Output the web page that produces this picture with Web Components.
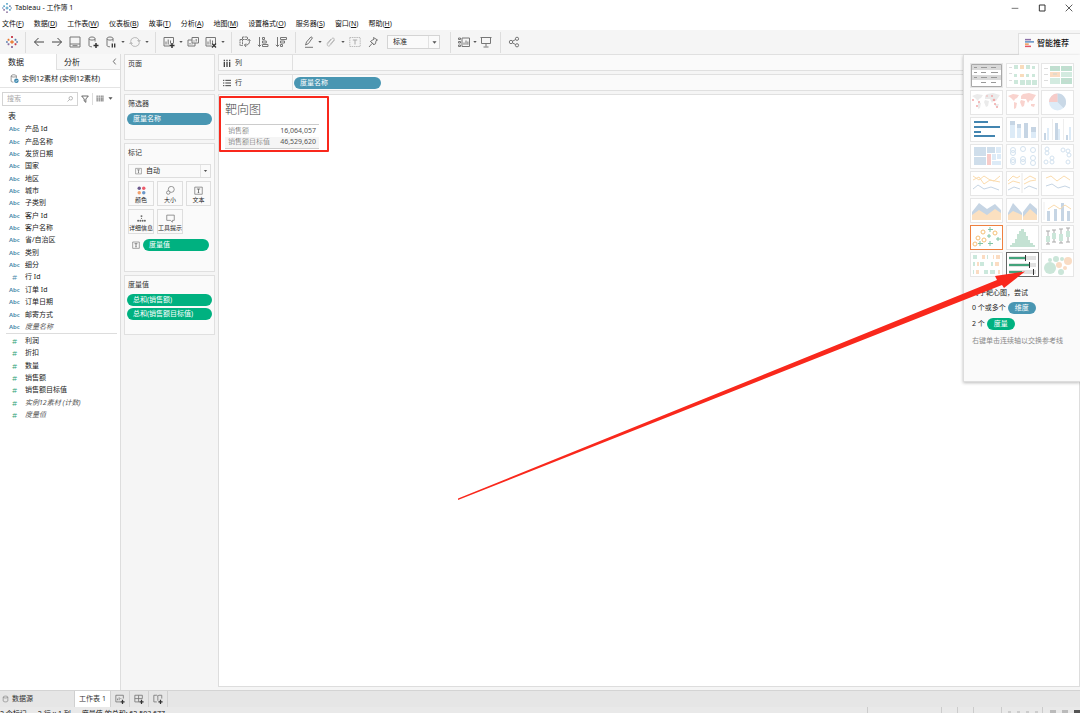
<!DOCTYPE html>
<html lang="zh-CN">
<head>
<meta charset="utf-8">
<title>Tableau - 工作簿 1</title>
<style>
html,body{margin:0;height:100%;overflow:hidden}
body{font:7px/10px "Noto Sans","Noto Sans CJK SC",sans-serif;color:#333;background:#fff}
</style>
</head>
<body>
<tb-app></tb-app>
<script>
const RESET = `*{box-sizing:border-box}button,input,select{font:inherit;color:inherit;margin:0;padding:0;border:0;background:none;border-radius:0;outline:0}
button{display:flex;align-items:center;justify-content:center}a{color:inherit;text-decoration:none}`;
function define(name, css, html, setup) {
  customElements.define(name, class extends HTMLElement {
    constructor() {
      super();
      this.attachShadow({mode: 'open'});
    }
    connectedCallback() {
      if (this.shadowRoot.firstChild) return;
      const t = document.createElement('template');
      t.innerHTML = `<style>${RESET}${css}</style>` + (typeof html === 'function' ? html(this) : html);
      this.shadowRoot.append(t.content.cloneNode(true));
      if (setup) setup(this);
    }
  });
}

/* ---------- icons, 12 x 12 ---------- */
const chart = '<path d="M1 1.5h9.5v8.5h-9.5zM3 8.5v-3M5.200 8.500v-5M7.500 8.500v-4"/>';
const cyl = '<path d="M2 2.500c0-2 6-2 6 0v3M2 2.500v7c0 1 2 1.300 3 1.300M2 2.800c0 1.700 6 1.700 6 0"/>';
const plus = '<path stroke="#333" stroke-width="1.500" d="M9 7v5M6.500 9.500h5"/>';
const spokes = (a, b) => `<g stroke-width="1.300"><path stroke="${a}" d="M6 4.200v3.600M4.200 6h3.600M2.500 2.800v2M1.500 3.800h2"/><path stroke="${b}" d="M9.500 7.200v2M8.500 8.200h2M6 0v2M5 1h2"/><path stroke="#5b7fae" d="M9.500 2.800v2M8.500 3.800h2M0 6h1.800M10.200 6h1.800"/><path stroke="#8a6f9e" d="M2.500 7.200v2M1.500 8.200h2M6 10v2M5 11h2"/></g>`;
const ICONS = {
  app: spokes('#4a9cc4', '#4a9cc4'),
  logo: spokes('#e8762c', '#c7384a'),
  back: '<path stroke="#444" d="M11 6H1.500M5.500 2L1.500 6l4 4"/>',
  fwd: '<path stroke="#444" d="M1 6h9.500M6.500 2l4 4-4 4"/>',
  save: '<path d="M1 1h10v10H1zM1 8h10M3.500 9.700h5"/>',
  newds: cyl + plus,
  pause: cyl + '<path stroke="#333" stroke-width="1.300" d="M7.300 7.500v4M9.700 7.500v4"/>',
  refresh: '<path stroke="#bbb" d="M1.500 5.500a4.500 4.500 0 0 1 8.500-1.500M10.500 6.500a4.500 4.500 0 0 1-8.500 1.500"/><path fill="#bbb" stroke="none" d="M8 4h4l-2 2.800zM0 8h4L2 5.200z"/>',
  newsheet: chart + '<path stroke="#f5f5f5" stroke-width="3" d="M9 7v5M6.500 9.500h5"/>' + plus,
  dup: '<path d="M5 1.500h6.500v5.500H5zM7 5.500v-1M9.200 5.500v-2.500M5 4H1v6h7V7M3 8.500V7M5 8.500V7.500"/>',
  clear: chart + '<path stroke="#f5f5f5" stroke-width="3" d="M7 7.500l4 4"/><path stroke="#333" stroke-width="1.300" d="M7 7.500l4 4M11 7.500l-4 4"/>',
  swap: '<path stroke-dasharray="2 .6" d="M3.500 1h5v2.500h-5zM1 3.500h2.500v6H1z"/><path d="M10 3.500c1 2.500.5 4.500-2 5.500H5.500M7 7.500L5.500 9l1.500 2M8.800 4.800L10 3.200l1.500 1.500"/>',
  asc: '<path d="M2.500 1v9.500M.8 8.800l1.700 1.700 1.700-1.700M5.500 1.500h2v2h-2zM5.500 5h3.800v2H5.500zM5.500 8.500h5.500v2H5.500z"/>',
  desc: '<path d="M2.500 1v9.500M.8 8.800l1.700 1.700 1.700-1.700M5.500 1.500h6v2h-6zM5.500 5h4v2h-4zM5.500 8.500h2v2h-2z"/>',
  pen: '<path d="M2.500 9l1-3L8 .8l1.500 1L5.500 7.500zM2 11.300h8" />',
  clip: '<path stroke="#bbb" d="M9.500 4L5 9.500c-1.500 1.500-3.500 0-2.500-1.500L7 2.500c1-1.300 3 0 2 1.500L5 8.500M6 3L2 7.500"/>',
  tbox: '<path stroke="#bbb" stroke-dasharray="1.500 .7" d="M.8 1.500h10.400v9H.8z"/><path stroke="#aaa" d="M3.800 4h4.400M6 4v4.500"/>',
  pin: '<path d="M6.500 1.500l4 2.500-1.500.8-.5 3-1.500.7-3.500-3 1.500-1.200 2-1zM5 7.500L2 11M3.500 5.500l3.500 3.500"/>',
  showme: '<path stroke="#777" d="M4 2h7.500v8.500H4zM6 8.800V6.500M8 8.800V4.500M9.900 8.800V5.500M.5 2h2v1.500h-2zM.5 5.500h2V7h-2zM.5 9h2v1.500h-2z"/>',
  present: '<path d="M.5 1.500h11M1.500 1.500v6h9v-6M6 7.500v3M3.500 11h5"/>',
  share: '<circle cx="3" cy="6" r="1.700"/><circle cx="9" cy="2.800" r="1.600"/><circle cx="9" cy="9.300" r="1.600"/><path d="M4.500 5.200l3-1.600M4.500 6.900l3 1.600"/>',
  caret: '<path fill="#555" stroke="none" d="M1 3h10L6 9z"/>',
  collapse: '<path stroke="#444" stroke-width="1.300" d="M8 1L4 6l4 5"/>',
  db: '<path d="M1.500 2.500c0-2 7-2 7 0v3M1.500 2.500v7c0 1 2 1.300 3 1.300M1.500 2.800c0 1.700 7 1.700 7 0"/><circle cx="8.500" cy="9" r="3" fill="#3a86ad" stroke="none"/><path stroke="#fff" d="M7.200 9l1 1 1.700-2"/>',
  cyl: '<path d="M2 2.500c0-2 8-2 8 0v7c0 2-8 2-8 0zM2 2.800c0 2 8 2 8 0"/>',
  search: '<circle cx="7.500" cy="4.500" r="3.500"/><path d="M5 7L1 11"/>',
  filter: '<path stroke="#555" stroke-width="1.300" d="M1 1.500h10L7.300 6v5l-2.500-2V6z"/>',
  grid: '<path stroke="#888" stroke-width="2.200" d="M1.100 1v10M4.600 1v10M8.100 1v10M11 1v10"/><path stroke="#fff" stroke-width=".6" d="M0 4h12"/>',
  cols: '<path stroke="#444" stroke-width="2" d="M2 1v2M6 1v2M10 1v2M2 4v8M6 4v8M10 4v8"/>',
  rows: '<path stroke="#444" stroke-width="1.500" d="M0 2h2M0 6h2M0 10h2M3.500 2H12M3.500 6H12M3.500 10H12"/>',
  text: '<path d="M1 1.500h10v9.500H1z"/><path stroke="#555" d="M3.800 4h4.400M6 4v4.800M5 8.800h2"/>',
  color: '<g stroke="none"><circle cx="3" cy="3" r="2.300" fill="#6b5a8e"/><circle cx="9" cy="3" r="2.300" fill="#ec5b6b"/><circle cx="3" cy="9" r="2.300" fill="#f4a06a"/><circle cx="9" cy="9" r="2.300" fill="#6a96c8"/></g>',
  size: '<circle cx="7" cy="4.500" r="4"/><circle cx="3" cy="8.800" r="2.300" fill="#fafafa"/>',
  detail: '<g fill="#666" stroke="none"><circle cx="6" cy="2.800" r="1.300"/><circle cx="6" cy="5.700" r=".8"/><circle cx="1.500" cy="9" r="1.300"/><circle cx="4.500" cy="9" r="1.300"/><circle cx="7.500" cy="9" r="1.300"/><circle cx="10.500" cy="9" r="1.300"/></g>',
  tip: '<path d="M1 1.500h10v7H8.500V11L6 8.500H1z"/>',
  reco: '<g stroke-width="2"><path stroke="#8b6fa8" d="M0 1.500h8"/><path stroke="#5f8fc4" d="M0 4.500h12"/><path stroke="#f29a55" d="M0 7.500h5"/><path stroke="#e25565" d="M0 10.500h8"/></g>',
  min: '<path stroke="#333" d="M1 6.500h10"/>',
  max: '<path stroke="#333" stroke-width="1.500" d="M2 1.500h8.500v9H2z"/>',
  close: '<path stroke="#333" stroke-width="1.200" d="M1 1l10 10M11 1L1 11"/>',
  tabsheet: '<path d="M10 5.500V1.500H1v8h5M3 7.500v-2M5 7.500V4M7 6V5"/>' + plus,
  tabdash: '<path d="M10 5.500V1.500H1v8h5M5.500 1.500v8M1 5.500h9"/>' + plus,
  tabstory: '<path d="M10.500 5.500v-4H7L5.800 2.500 4.500 1.500H1v8h3.500M5.800 2.500V8"/>' + plus
};
define('tb-icon', ':host{display:block;flex:none;width:12px;height:12px}svg{display:block;width:100%;height:100%}',
  el => `<svg viewBox="0 0 12 12" fill="none" stroke="#777" stroke-width="1" aria-hidden="true">${ICONS[el.getAttribute('name')]}</svg>`);

/* ---------- window frame ---------- */
define('tb-titlebar', `:host{display:flex;align-items:center;height:16px;padding:0 4px 0 2px;background:#fff}
 .app{width:10px;height:10px}span{flex:1;padding-left:3px;color:#111}
 button{width:14px;height:12px;margin-left:13px}button tb-icon{width:8px;height:8px}button:nth-of-type(-n+2){position:static}`,
 `<tb-icon class="app" name="app"></tb-icon><span>Tableau - 工作簿 1</span>
 <button aria-label="最小化"><tb-icon name="min"></tb-icon></button><button aria-label="最大化"><tb-icon name="max"></tb-icon></button><button aria-label="关闭"><tb-icon name="close"></tb-icon></button>`);

const MENUS = [['文件','F'],['数据','D'],['工作表','W'],['仪表板','B'],['故事','T'],['分析','A'],['地图','M'],['设置格式','O'],['服务器','S'],['窗口','N'],['帮助','H']];
define('tb-menubar', ':host{display:flex;box-sizing:border-box;align-items:center;gap:10px;height:14px;padding:2px 0 0 2px;background:#fff}button{color:#111;white-space:nowrap}',
  MENUS.map(([t,k]) => `<button><span>${t}(<u>${k}</u>)</span></button>`).join(''));

const b = (i, c = '') => `<button class="${c}" aria-label="${i}"><tb-icon name="${i}"></tb-icon>${c ? '<tb-icon class="c" name="caret"></tb-icon>' : ''}</button>`;
define('tb-toolbar', `:host{display:flex;align-items:center;height:24px;padding-left:6px;background:#f5f5f5}
 button{width:18px;justify-content:flex-start}.split{width:24px;gap:4px}.tight{width:22px;gap:3px}
 .c{width:4px;height:4px}i{width:1px;height:21px;background:#ddd;margin:0 7px 0 2px}
 .logo{width:17px}
 label{display:flex;align-items:center;position:relative;width:53px;height:14px;margin:0 8px 0 2px}
 select{appearance:none;width:100%;height:100%;padding-left:5px;border:1px solid #d4d4d4;background:#fafafa;color:#222}
 label .c{position:absolute;right:3px;top:5px;width:5px;height:5px}label::after{content:"";position:absolute;right:11px;top:1px;bottom:1px;width:1px;background:#e2e2e2}`,
 `${b('logo').replace('class=""','class="logo"')}<i></i>${b('back')}${b('fwd')}${b('save')}${b('newds')}${b('pause','split')}${b('refresh','split')}<i></i>
 ${b('newsheet','split')}${b('dup')}${b('clear','split')}<i></i>${b('swap')}${b('asc')}${b('desc')}<i></i>
 ${b('pen','tight')}${b('clip','split')}${b('tbox')}${b('pin')}<label><select aria-label="适合"><option>标准</option></select><tb-icon class="c" name="caret"></tb-icon></label><i></i>
 ${b('showme','tight')}${b('present')}<i></i>${b('share')}`);

/* ---------- data pane ---------- */
define('tb-field', `:host{display:flex;flex:1;align-items:center;color:#222}
 b{width:25px;padding-left:9px;font:600 6px/10px "Noto Sans",sans-serif;color:#3f86a8}
 :host([kind="#"]) b,:host([kind="m"]) b{padding-left:12px;font-size:8px;font-weight:300}
 :host([kind="m"]) b{color:#1f9e73}:host([calc]) span{font-style:italic;color:#555}`,
 el => `<b>${el.getAttribute('kind') === 'Abc' ? 'Abc' : '#'}</b><span><slot></slot></span>`);

const DIMS = ['产品 Id','产品名称','发货日期','国家','地区','城市','子类别','客户 Id','客户名称','省/自治区','类别','细分','行 Id','订单 Id','订单日期','邮寄方式','度量名称'];
const MEAS = ['利润','折扣','数量','销售额','销售额目标值','实例12素材 (计数)','度量值'];
define('tb-data-pane', `:host{display:flex;flex-direction:column;background:#fff;border-right:1px solid #ddd}
 nav{display:flex;height:16px}nav button{justify-content:flex-start;padding-left:8px;font-size:8px;color:#222}
 nav .on{width:56px}nav .off{flex:1;background:#f8f8f8;border:1px solid #e0e0e0;border-width:0 0 1px 1px;padding-right:2px;padding-left:7px}
 .off span{flex:1;text-align:left}.off tb-icon{width:7px;height:7px}
 .src{display:flex;align-items:center;gap:3px;height:18px;padding-left:10px;border-bottom:1px solid #e4e4e4;color:#222}.src tb-icon{width:9px;height:9px}
 .find{display:flex;align-items:center;height:21px;padding:0 7px 0 2px}
 label{display:flex;align-items:center;flex:1;height:14px;border:1px solid #d4d4d4;padding:0 4px}
 input{min-width:0;flex:1;width:20px}input::placeholder{color:#aaa}
 label tb-icon{width:6px;height:6px}.f{width:8px;height:8px;margin:0 3px}.s{width:1px;height:12px;background:#ddd}.g{width:8px;height:7px;margin:0 4px 0 3px}.c{width:5px;height:5px}
 h2{margin:2px 0 2px 8px;font-weight:400;font-size:8px;line-height:10px;color:#222}
 .list{display:flex;flex-direction:column}.d{height:210px}.m{height:86px;margin-top:1px}hr{width:calc(100% - 9px);margin:0 3px 0 6px;border:0;border-top:1px solid #ddd}`,
 `<nav><button class="on">数据</button><button class="off"><span>分析</span><tb-icon name="collapse"></tb-icon></button></nav>
 <div class="src"><tb-icon name="db"></tb-icon><span>实例12素材 (实例12素材)</span></div>
 <div class="find"><label><input type="text" placeholder="搜索" aria-label="搜索"><tb-icon name="search"></tb-icon></label><tb-icon class="f" name="filter"></tb-icon><div class="s"></div><tb-icon class="g" name="grid"></tb-icon><tb-icon class="c" name="caret"></tb-icon></div>
 <h2>表</h2>
 <div class="list d">${DIMS.map(n => `<tb-field kind="${n === '行 Id' ? '#' : 'Abc'}" ${n === '度量名称' ? 'calc' : ''}>${n}</tb-field>`).join('')}</div><hr>
 <div class="list m">${MEAS.map((n,i) => `<tb-field kind="m" ${i > 4 ? 'calc' : ''}>${n}</tb-field>`).join('')}</div>`);

/* ---------- cards and shelves ---------- */
define('tb-pill', `:host{display:flex;align-items:center;height:12px;border-radius:6px;padding:0 6px;background:#4996b2;color:#fff;white-space:nowrap}:host([green]){background:#00b180}`, '<slot></slot>');
define('tb-card', `:host{display:block;background:#fafafa;border:1px solid #e0e0e0;padding:4px 2px 3px}
 h3{margin:0 1px 4px;font-size:7px;line-height:10px;font-weight:400;color:#333}`, el => `<h3>${el.getAttribute('label')}</h3><slot></slot>`);
define('tb-mark', `:host{display:block}button{flex-direction:column;justify-content:space-between;width:100%;height:25px;border:1px solid #dedede;background:#fafafa;padding:4px 0 0;font-size:6px;line-height:9px;color:#222;white-space:nowrap}tb-icon{width:9px;height:9px}`,
 el => `<button><tb-icon name="${el.getAttribute('icon')}"></tb-icon><span><slot></slot></span></button>`);
define('tb-marks', `:host{display:block;padding:2px 1px 0}
 label{display:flex;position:relative;height:14px;margin-bottom:3px}select{appearance:none;width:100%;border:1px solid #dedede;padding-left:17px;color:#222}
 .t{position:absolute;left:7px;top:3px;width:7px;height:8px}.c{position:absolute;right:3px;top:5px;width:5px;height:4px}label::after{content:"";position:absolute;right:10px;top:1px;bottom:1px;width:1px;background:#e4e4e4}
 .g{display:grid;grid-template-columns:repeat(3,1fr);gap:3px}
 .p{display:flex;align-items:center;gap:3px;margin-top:5px;padding:0 2px 0 4px}.p tb-icon{width:8px;height:8px}tb-pill{flex:1}`,
 `<label><select aria-label="标记类型"><option>自动</option></select><tb-icon class="t" name="text"></tb-icon><tb-icon class="c" name="caret"></tb-icon></label>
 <div class="g"><tb-mark icon="color">颜色</tb-mark><tb-mark icon="size">大小</tb-mark><tb-mark icon="text">文本</tb-mark><tb-mark icon="detail">详细信息</tb-mark><tb-mark icon="tip">工具提示</tb-mark></div>
 <div class="p"><tb-icon name="text"></tb-icon><tb-pill green>度量值</tb-pill></div>`);
define('tb-cards', `:host{display:flex;flex-direction:column;gap:3px;padding:0 3px;background:#f5f5f5}
 .a{min-height:37px}.b{min-height:46px}.c{min-height:129px}.d{min-height:60px}tb-pill+tb-pill{margin-top:2px}`,
 `<tb-card class="a" label="页面"></tb-card><tb-card class="b" label="筛选器"><tb-pill>度量名称</tb-pill></tb-card>
 <tb-card class="c" label="标记"><tb-marks></tb-marks></tb-card>
 <tb-card class="d" label="度量值"><tb-pill green>总和(销售额)</tb-pill><tb-pill green>总和(销售额目标值)</tb-pill></tb-card>`);
define('tb-shelf', `:host{display:flex;align-items:center;height:17px;background:#fafafa;border:1px solid #e0e0e0}
 div{display:flex;align-items:center;gap:4px;width:74px;height:100%;padding-left:4px;border-right:1px solid #e0e0e0;color:#333}tb-icon{width:8px;height:8px}::slotted(*){width:87px;margin-left:1px}`,
 el => `<div><tb-icon name="${el.getAttribute('icon')}"></tb-icon><span>${el.getAttribute('label')}</span></div><slot></slot>`);
define('tb-sheet', `:host{display:block;flex:1;background:#fff;border:1px solid #ddd;border-top-color:#e0e0e0}
 section{width:110px;height:56px;border:2px solid #f9281c;border-radius:1px;padding:3px 4px 0;margin-top:1px}
 h1{margin:0 0 7px;font-size:12px;line-height:16px;font-weight:300;color:#444;font-family:"Noto Sans CJK SC",sans-serif}
 table{width:94px;border-collapse:collapse;border-top:1px solid #ccc;border-bottom:1px solid #ccc}
 th,td{height:12px;padding:0 3px;font-weight:300;color:#555;line-height:10px;white-space:nowrap}th{text-align:left}td{text-align:right;padding-left:0;font-weight:400;color:#555}tr+tr{background:#f5f5f5}`,
 `<section><h1>靶向图</h1><table><tr><th scope="row">销售额</th><td>16,064,057</td></tr><tr><th scope="row">销售额目标值</th><td>46,529,620</td></tr></table></section>`);
define('tb-work', `:host{display:flex;flex-direction:column;gap:3px;min-width:0;background:#f5f5f5;padding-bottom:3px}`,
 `<tb-shelf icon="cols" label="列"></tb-shelf><tb-shelf icon="rows" label="行"><tb-pill>度量名称</tb-pill></tb-shelf><tb-sheet></tb-sheet>`);

/* ---------- show me ---------- */
const R = (f, list) => list.map(([x,y,w,h]) => `<rect x="${x}" y="${y}" width="${w}" height="${h}" fill="${f}"/>`).join('');
const L = (s, d, w = 1) => `<path d="${d}" stroke="${s}" stroke-width="${w}" fill="none"/>`;
const O = (s, list, r = 2.5) => list.map(([x,y]) => `<circle cx="${x}" cy="${y}" r="${r}" fill="none" stroke="${s}"/>`).join('');
const D = (f, list) => list.map(([x,y,r]) => `<circle cx="${x}" cy="${y}" r="${r}" fill="${f}"/>`).join('');
const land = '<path d="M2 6l5-2 6 1-2 3-2 1-1 2-3-3zM8 12l3 1-1 5-2 1zM15 6l2-2 6-1 7 2-2 3-2 3-2-1-2 3-2-4-5 0zM15 10l4 1-1 5-2 1-2-5zM25 14l4 0-1 3-3-1z" fill="';
const THUMBS = [
  ['文本表', R('#d9d9d9',[[2,2,29,5],[2,12,29,5]]) + L('#a9a9a9','M1.500 1.500h30v22h-30z') + R('#999',[[4,4,3,1],[11,4,6,1],[21,4,5,1],[4,9,3,1],[11,9,5,1],[21,9,7,1],[4,14,3,1],[11,14,6,1],[21,14,6,1],[11,19,5,1],[21,19,5,1]])],
  ['热图', R('#cde8db',[[8,2,4,4],[20,2,4,4],[26,3,3,3],[8,11,3,3],[20,11,3,3],[8,17,4,4],[14,17,5,5],[20,17,5,5],[26,17,5,5],[26,11,3,3]]) + R('#f9dcbc',[[14,2,4,4],[14,11,4,3]]) + R('#ddd',[[3,4,3,1],[3,10,3,1],[3,17,3,1]])],
  ['突出显示表', R('#bfe0d0',[[9,3,10,5],[20,3,11,5],[20,15,11,6]]) + R('#d3ebe0',[[9,15,10,6],[20,9,11,5]]) + R('#fbdcc2',[[9,9,10,5]]) + R('#ddd',[[3,5,4,1],[3,11,4,1],[3,17,4,1]]) + L('#ccd8d2','M12 5h5M23 5h5M12 11h4M23 18h5')],
  ['符号地图', land + '#ebebeb"/>' + D('#f0a8a8',[[3,10,1],[9,12,1],[7,16,1],[22,6,1],[24,10,1.300],[25,14,1],[27,17,1],[17,6,.8]])],
  ['地图', land + '#f9d3ce"/>'],
  ['饼图', '<circle cx="16.500" cy="12" r="8.500" fill="#ddebf7"/><path d="M16.500 12V3.500a8.500 8.500 0 0 1 6 14.500z" fill="#c9d8e6"/><path d="M16.500 12h-8.500a8.500 8.500 0 0 1 8.500-8.500z" fill="#f7ccc9"/>'],
  ['水平条', R('#4385b0',[[4,4,14,2],[4,9,26,2],[4,14,7,2],[4,18,21,2]])],
  ['堆叠条', R('#ddebf7',[[4,4,5,17],[11,7,4,14],[18,6,4,15],[25,10,5,11]]) + R('#c6d5e4',[[4,4,5,4],[11,7,4,4],[18,6,4,15],[25,10,5,5]])],
  ['并排条', R('#c6d5e4',[[3,16,2,7],[14,6,3,17],[25,18,2,5]]) + R('#ddebf7',[[6,11,2,12],[17,12,2,11],[28,10,2,13]]) + L('#eee','M11.500 2v21M22.500 2v21')],
  ['树状图', R('#cfdeeb',[[4,3,12,9],[4,13,12,8],[17,3,8,6]]) + R('#ddebf7',[[26,3,5,6],[22,10,4,6],[27,10,4,5],[22,17,9,4]]) + R('#f7ccc9',[[17,10,4,11]])],
  ['圆视图', O('#d3e2ef',[[7,6],[7,9],[7,16],[7,18],[17,5],[17,15],[17,18],[27,6],[27,14],[27,19]])],
  ['并排圆', O('#d3e2ef',[[6,5],[6,9],[5,18],[11,14],[11,18],[22,6],[27,7],[28,11],[27,18]], 2)],
  ['连续线', L('#fbdcae','M3 5l6 4 5-4 6 4 4 1 6-5M3 9l6-3 5 7 6-4 10 2') + L('#c6d5e4','M3 18l5-4 6 4 7-2 8 3')],
  ['离散线', L('#fbdcae','M2 10l5-5 4 2 3-2M18 9l6-4 6 3M2 13l5-3 7 2M18 13l6-3 6-1') + L('#c6d5e4','M2 19l6-3 6 2M18 18l5-3 8 3') + L('#e8e8e8','M16 2v20')],
  ['双线', L('#fbdcae','M5 7l5-2 6 5 7-5 6 4') + L('#c6d5e4','M5 15l6-2 6 4 7-2 5 2')],
  ['连续面积', '<path d="M2 14l7-9 8 6 8-5 6 6v10H2z" fill="#c6d5e4"/><path d="M2 17l7-5 8 5 8-6 6 4v7H2z" fill="#fbe0c0"/>'],
  ['离散面积', '<path d="M2 15l5-10 9 10v7H2zM17 14l7-9 7 6v11H17z" fill="#c6d5e4"/><path d="M2 17l5-4 9 4v5H2zM17 19l7-8 7 6v5H17z" fill="#fbe0c0"/>'],
  ['双组合', R('#c6d5e4',[[6,13,3,10],[13,11,3,12],[20,5,3,18],[26,13,3,10]]) + L('#fbdcae','M7 11l6-4 6 4 5-4 6 4') + L('#eee','M3 4v18')],
  ['散点图', O('#f5bf76',[[13,7],[8,13],[5,19],[14,15],[25,8]], 2) + L('#83c4a6','M20 2v5M18 4.500h5M19 9v4M17 11h4M10 16v5M8 18.500h5M20 16v5M18 18.500h5M28 12v4M26 14h5')],
  ['直方图', R('#c4e2d3',[[4,20,2,2],[6,18,3,4],[9,14,2,8],[11,9,2,13],[13,6,2,16],[15,4,3,18],[18,7,2,15],[20,11,2,11],[22,15,2,7],[24,18,3,4],[27,20,2,2]])],
  ['盒须图', L('#aaa','M7 6v13M13 5v12M20 4v14M27 3v14M5 6h4M5 19h4M11 5h4M11 17h4M18 4h4M18 18h4M25 3h4M25 17h4') + R('#cbe6d9',[[5,11,4,6],[11,8,4,6],[18,9,4,7],[25,6,4,6]])],
  ['甘特图', R('#cbe8dc',[[3,3,4,4],[17,3,1,4],[3,10,2,4],[10,10,4,4],[21,10,2,4],[3,18,1,4],[14,18,4,4],[20,18,5,4]]) + R('#fbdcc2',[[12,3,3,4],[23,3,1,4],[26,3,4,4],[7,10,2,4],[25,10,4,4],[6,18,3,4],[28,18,2,4]])],
  ['靶心图', R('#e2e2e2',[[3,4,27,4],[3,11,27,4],[3,18,27,4]]) + R('#43a37b',[[3,5,16,2],[3,12,21,2],[3,19,13,2]]) + R('#333',[[19,3,1,6],[23,10,1,6],[27,17,1,6]])],
  ['填充气泡图', D('#cbe6d9',[[9,16,6],[15,7,3],[9,8,2],[20,20,3],[21,7,2]]) + D('#f9dcc4',[[18,13,3],[27,9,4],[24,16,2]])]
];
define('tb-showme', `:host{display:block;color:#222}
 header{display:flex;align-items:center;gap:3px;width:62px;height:22px;margin-left:auto;padding:0 0 3px 6px;background:#fafafa;border:1px solid #e0e0e0;border-width:1px 0 0 1px;font-size:8px;white-space:nowrap;color:#111;font-weight:500}header tb-icon{width:9px;height:10px}
 .box{height:327px;background:#fafafa;border:1px solid #ddd;border-width:0 0 1px 1px;box-shadow:0 1px 3px #0004;padding:8px 6px 0}
 .g{display:grid;grid-template-columns:repeat(3,33px);justify-content:space-between;gap:2px}
 .g button{height:25px;border:1px solid #e6e6e6;background:#fff}.g button.o{border-color:#ee8040}.g button.k{border-color:#666}svg{display:block;width:31px;height:23px}
 p{display:flex;align-items:center;gap:2px;margin:0 0 0 2px;height:12px;white-space:nowrap}.t{margin-top:10px}.a{margin-top:3px}.a+.a{margin-top:4px}.n{margin-top:5px;color:#888}tb-pill{padding:0 7px}`,
 `<header><tb-icon name="reco"></tb-icon><span>智能推荐</span></header><div class="box"><div class="g">${THUMBS.map(([n,s],i) => `<button aria-label="${n}" class="${i === 18 ? 'o' : i === 22 ? 'k' : ''}"><svg viewBox="1 1 31 23">${s}</svg></button>`).join('')}</div>
 <p class="t">对于靶心图，尝试</p><p class="a">0 个或多个 <tb-pill>维度</tb-pill></p><p class="a">2 个 <tb-pill green>度量</tb-pill></p><p class="n">右键单击连续轴以交换参考线</p></div>`);

/* ---------- bottom ---------- */
define('tb-tabs', `:host{display:flex;height:17px;background:#e6e6e6;border-top:1px solid #d4d4d4;color:#333}
 button{height:100%;border-right:1px solid #d0d0d0;width:19px}.src{width:75px;justify-content:flex-start;gap:3px;padding-left:2px}.on{width:36px;background:#fff}.src tb-icon{width:7px;height:8px}tb-icon{width:10px;height:10px}`,
 `<button class="src"><tb-icon name="cyl"></tb-icon><span>数据源</span></button><button class="on">工作表 1</button>
 <button aria-label="新建工作表"><tb-icon name="tabsheet"></tb-icon></button><button aria-label="新建仪表板"><tb-icon name="tabdash"></tb-icon></button><button aria-label="新建故事"><tb-icon name="tabstory"></tb-icon></button>`);
define('tb-status', `:host{display:flex;gap:11px;height:6px;box-sizing:border-box;background:#e9e9e9;padding:2px 0 0;color:#111;overflow:hidden;white-space:nowrap}
 .r{display:flex;margin-left:auto;margin-top:-2px}.r i{border-left:1px solid #ccc;height:6px;box-sizing:border-box}.w{width:74px}.x{width:16px}.y{width:28px}.z{width:41px;background:repeating-linear-gradient(90deg,transparent 0 6px,#ccc 6px 9px) 0 4px no-repeat}.v{width:8px}.r b{align-self:flex-end;width:6px;height:3px;margin-right:6px;background:#bbb}.r b:last-child{background:#555;margin:0}`,
 `<span>2 个标记</span><span>2 行 x 1 列</span><span>度量值 的总和: 62,593,677</span><div class="r"><i class="w"></i><i class="x"></i><i class="x"></i><i class="y"></i><i class="z"></i><i class="v"></i><b></b><b></b><b></b></div>`);

/* ---------- page ---------- */
define('tb-app', `:host{display:flex;flex-direction:column;height:100vh;position:relative}
 main{flex:1;min-height:0;display:grid;grid-template-columns:121px 97px 1fr}
 tb-showme{position:absolute;top:33px;right:0;width:117px}
 .arrow{position:absolute;left:458px;top:268px;width:570px;height:232px;pointer-events:none}`,
 `<tb-titlebar></tb-titlebar><tb-menubar></tb-menubar><tb-toolbar></tb-toolbar>
 <main><tb-data-pane></tb-data-pane><tb-cards></tb-cards><tb-work></tb-work></main>
 <tb-tabs></tb-tabs><tb-status></tb-status><tb-showme></tb-showme>
 <svg class="arrow" viewBox="0 0 570 232" aria-hidden="true"><path fill="#f9281c" d="M0 230.500L539 12l-2-4L567 3.500 546 20l-2-3L0 232z"/></svg>`);
</script>
</body>
</html>
